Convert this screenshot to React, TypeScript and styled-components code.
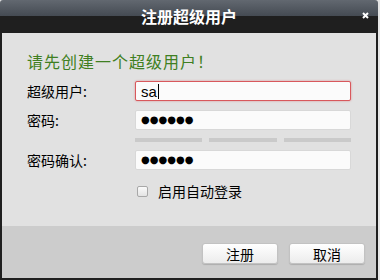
import styled, { createGlobalStyle } from 'styled-components';

const GlobalStyle = createGlobalStyle`
  html, body {
    margin: 0;
    padding: 0;
    background: #e6e6e6;
  }
  body {
    font-family: "Liberation Sans", "Noto Sans CJK SC", sans-serif;
    font-size: 14px;
    color: #000;
  }
`;

const App = () => {
  return (
    <>
      <GlobalStyle />
      <Window>
        <TitleBar>
          <Title>注册超级用户</Title>
          <CloseButton>
            <svg width="7" height="7" viewBox="0 0 7 7">
              <path d="M1 1 L6 6 M6 1 L1 6" stroke="#fff" strokeWidth="2" />
            </svg>
          </CloseButton>
        </TitleBar>
        <Body>
          <Heading>请先创建一个超级用户！</Heading>
          <Row $top={11}>
            <Label>超级用户:</Label>
            <Input $active>
              sa<Caret />
            </Input>
          </Row>
          <Row $top={9}>
            <Label>密码:</Label>
            <Input>
              <Dots>●●●●●●</Dots>
            </Input>
          </Row>
          <Strength>
            <Segment />
            <Segment />
            <Segment />
          </Strength>
          <Row $top={8}>
            <Label>密码确认:</Label>
            <Input>
              <Dots>●●●●●●</Dots>
            </Input>
          </Row>
          <CheckRow>
            <Checkbox />
            <CheckLabel>启用自动登录</CheckLabel>
          </CheckRow>
        </Body>
        <Footer>
          <Button>注册</Button>
          <Button>取消</Button>
        </Footer>
      </Window>
    </>
  );
};

export default App;

const Window = styled.div`
  width: 378px;
  height: 280px;
  display: flex;
  flex-direction: column;
  box-sizing: border-box;
`;

const TitleBar = styled.div`
  height: 33px;
  flex: none;
  position: relative;
  display: flex;
  align-items: center;
  justify-content: center;
  border-radius: 3px 3px 0 0;
  background: linear-gradient(
    to bottom,
    #626870 0,
    #454b53 48%,
    #1f1f1f 50%,
    #1f1f1f 100%
  );
`;

const Title = styled.div`
  color: #fff;
  font-family: "Noto Sans CJK SC", sans-serif;
  font-weight: bold;
  font-size: 16px;
  line-height: 18px;
  margin-top: -1px;
`;

const CloseButton = styled.div`
  position: absolute;
  right: 9px;
  top: 12px;
  width: 7px;
  height: 7px;
  display: flex;
`;

const Body = styled.div`
  flex: none;
  height: 193px;
  box-sizing: border-box;
  background: #e1e1e1;
  border-left: 2px solid #1f1f1f;
  border-right: 2px solid #1f1f1f;
  padding: 19px 25px 0 25px;
  display: flex;
  flex-direction: column;
`;

const Heading = styled.div`
  color: #3f7f22;
  font-family: "Noto Sans CJK SC", sans-serif;
  font-size: 16px;
  line-height: 18px;
  letter-spacing: 1px;
`;

const Row = styled.div<{ $top: number }>`
  display: grid;
  grid-template-columns: 108px 216px;
  align-items: center;
  margin-top: ${(p) => p.$top}px;
`;

const Label = styled.div`
  font-family: "Noto Sans CJK SC", sans-serif;
  font-size: 14px;
  line-height: 20px;
`;

const Input = styled.div<{ $active?: boolean }>`
  height: 20px;
  box-sizing: border-box;
  display: flex;
  align-items: center;
  padding-left: 5px;
  background: #fbfbfb;
  border-radius: 2px;
  border: 1px solid ${(p) => (p.$active ? '#d8585c' : '#d8d8d8')};
  box-shadow: ${(p) => (p.$active ? '0 0 2px rgba(216, 80, 84, 0.6)' : 'none')};
  font-family: "Liberation Sans", sans-serif;
  font-size: 15px;
`;

const Caret = styled.span`
  display: inline-block;
  width: 1px;
  height: 15px;
  background: #000;
  margin-left: 1px;
`;

const Dots = styled.span`
  font-family: "DejaVu Sans", sans-serif;
  font-size: 10px;
  letter-spacing: 0;
  line-height: 18px;
`;

const Strength = styled.div`
  margin: 8px 0 0 108px;
  width: 216px;
  display: grid;
  grid-template-columns: 67px 68px 67px;
  column-gap: 7px;
`;

const Segment = styled.div`
  height: 4px;
  background: #cacaca;
`;

const CheckRow = styled.div`
  display: flex;
  align-items: center;
  margin: 12px 0 0 110px;
  gap: 10px;
  height: 18px;
`;

const Checkbox = styled.div`
  width: 11px;
  height: 11px;
  box-sizing: border-box;
  border: 1px solid #a8a8a8;
  border-radius: 2px;
  background: linear-gradient(to bottom, #fafafa, #e4e4e4);
`;

const CheckLabel = styled.span`
  font-family: "Noto Sans CJK SC", sans-serif;
  font-size: 14px;
  line-height: 18px;
  margin-top: -1px;
`;

const Footer = styled.div`
  flex: none;
  height: 54px;
  box-sizing: border-box;
  background: #cccccc;
  border: 2px solid #1f1f1f;
  border-top: none;
  display: flex;
  justify-content: flex-end;
  align-items: flex-start;
  padding: 17px 11px 0 0;
  gap: 11px;
`;

const Button = styled.div`
  width: 76px;
  height: 21px;
  box-sizing: border-box;
  display: flex;
  align-items: center;
  justify-content: center;
  border: 1px solid #c2c2c2;
  border-radius: 3px;
  background: linear-gradient(to bottom, #ffffff, #ececec);
  box-shadow: 0 1px 1px rgba(0, 0, 0, 0.15);
  font-family: "Noto Sans CJK SC", sans-serif;
  font-size: 14px;
  line-height: 18px;
`;
